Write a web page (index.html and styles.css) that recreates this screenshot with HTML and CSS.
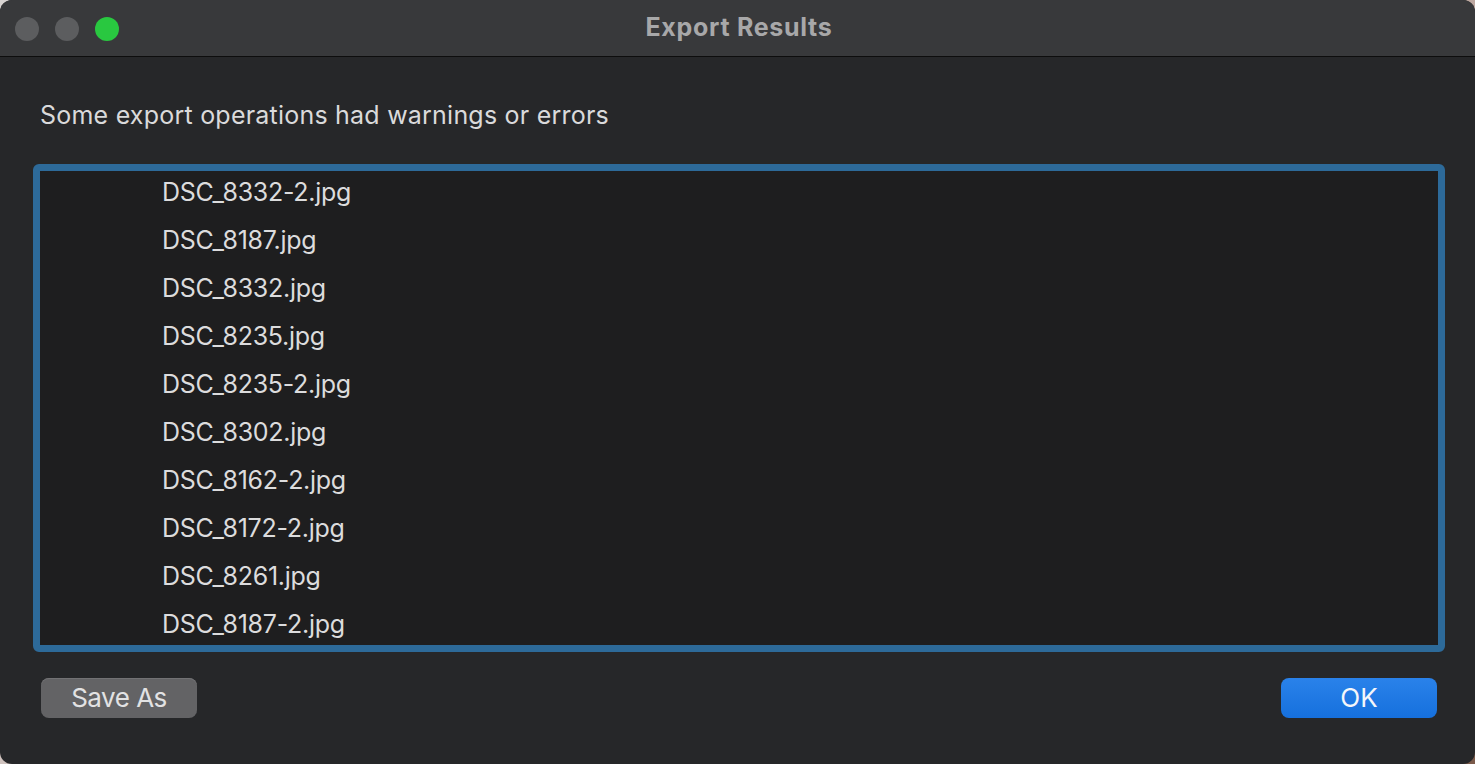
FILE: index.html
```html
<!DOCTYPE html>
<html lang="en">
<head>
<meta charset="utf-8">
<title>Export Results</title>
<link rel="stylesheet" href="styles.css">
</head>
<body>
<div class="window">
  <header class="titlebar">
    <div class="lights">
      <span class="light gray"></span>
      <span class="light gray"></span>
      <span class="light green"></span>
    </div>
    <div class="title">Export Results</div>
  </header>
  <main class="content">
    <p class="message">Some export operations had warnings or errors</p>
    <div class="listbox">
      <ul class="list">
        <li>DSC_8332-2.jpg</li>
        <li>DSC_8187.jpg</li>
        <li>DSC_8332.jpg</li>
        <li>DSC_8235.jpg</li>
        <li>DSC_8235-2.jpg</li>
        <li>DSC_8302.jpg</li>
        <li>DSC_8162-2.jpg</li>
        <li>DSC_8172-2.jpg</li>
        <li>DSC_8261.jpg</li>
        <li>DSC_8187-2.jpg</li>
      </ul>
    </div>
    <div class="footer">
      <button class="btn secondary">Save As</button>
      <button class="btn primary">OK</button>
    </div>
  </main>
</div>
</body>
</html>
```
FILE: styles.css
```css
html, body {
  margin: 0;
  padding: 0;
  width: 1475px;
  height: 764px;
  overflow: hidden;
  background: linear-gradient(135deg, #d8d4d2 0%, #c9b6b0 60%, #7a5a4a 100%);
}
body {
  font-family: Inter, "Noto Sans", "Liberation Sans", sans-serif;
}
.window {
  width: 1475px;
  height: 764px;
  border-radius: 12px;
  overflow: hidden;
  background: #262729;
  display: flex;
  flex-direction: column;
  box-sizing: border-box;
}
.titlebar {
  height: 56px;
  flex: none;
  background: #38393b;
  border-top: 1px solid #5e5f61;
  border-bottom: 1px solid #0d0d0d;
  box-sizing: content-box;
  margin-top: -1px;
  display: flex;
  align-items: center;
  position: relative;
}
.lights {
  display: flex;
  gap: 16px;
  padding-left: 15px;
  margin-top: 1px;
}
.light {
  width: 24px;
  height: 24px;
  border-radius: 50%;
  display: block;
}
.light.gray { background: #5c5d5f; }
.light.green { background: #29c840; }
.title {
  position: absolute;
  left: 0;
  right: 0;
  top: 0;
  bottom: 0;
  display: flex;
  align-items: center;
  justify-content: center;
  font-weight: 700;
  font-size: 25px;
  letter-spacing: 0.7px;
  color: #a8a8a9;
  padding-left: 3px;
  padding-bottom: 2px;
}
.content {
  flex: 1;
  display: flex;
  flex-direction: column;
  padding: 0 30px 0 33px;
}
.message {
  margin: 43px 0 0 7px;
  font-size: 25px;
  line-height: 30px;
  letter-spacing: 0.22px;
  color: #dadadb;
}
.listbox {
  margin-top: 34px;
  height: 488px;
  box-sizing: border-box;
  border: 7px solid #2d6a99;
  border-radius: 6px;
  background: #1e1e1f;
  overflow: hidden;
}
.list {
  list-style: none;
  margin: -3px 0 0 0;
  padding: 0 0 0 122px;
}
.list li {
  height: 48px;
  line-height: 48px;
  font-size: 25px;
  letter-spacing: -0.28px;
  color: #dcdcdd;
}
.footer {
  margin-top: 26px;
  display: flex;
  justify-content: space-between;
  padding: 0 8px 0 8px;
}
.btn {
  width: 156px;
  height: 40px;
  border: none;
  border-radius: 8px;
  font-family: Inter, "Noto Sans", "Liberation Sans", sans-serif;
  font-size: 26px;
  padding: 0;
  line-height: 40px;
}
.btn.secondary {
  background: #636365;
  color: #e2e2e3;
  letter-spacing: -0.5px;
  box-shadow: inset 0 1px 0 #727274;
}
.btn.primary {
  background: linear-gradient(#2a82ea, #1670dd);
  color: #f4f6fa;
}
```
